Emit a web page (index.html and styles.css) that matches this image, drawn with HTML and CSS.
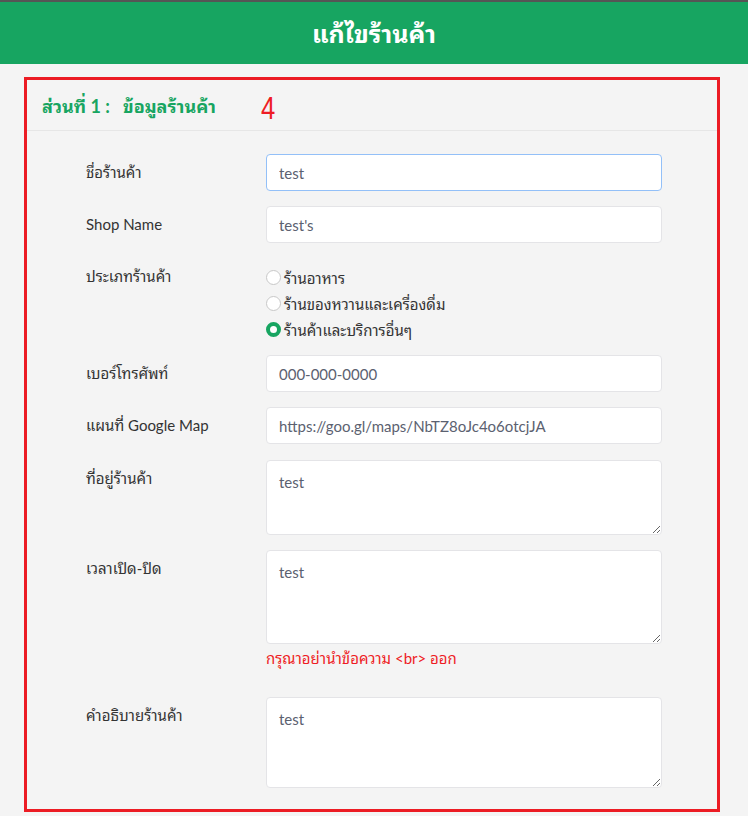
FILE: index.html
```html
<!DOCTYPE html>
<html lang="th">
<head>
<meta charset="utf-8">
<title>แก้ไขร้านค้า</title>
<link rel="stylesheet" href="styles.css">
</head>
<body>
<header class="topbar">
  <h1 class="topbar-title">แก้ไขร้านค้า</h1>
</header>
<main class="panel">
  <div class="panel-head">
    <h2 class="section-title">ส่วนที่ 1 :&nbsp;&nbsp; ข้อมูลร้านค้า</h2>
    <span class="annot">4</span>
  </div>
  <form class="form">
    <div class="row">
      <label class="label">ชื่อร้านค้า</label>
      <input class="field focused" type="text" value="test">
    </div>
    <div class="row">
      <label class="label">Shop Name</label>
      <input class="field" type="text" value="test's">
    </div>
    <div class="row row-radio">
      <label class="label">ประเภทร้านค้า</label>
      <div class="radios">
        <label class="radio"><span class="dot"></span>ร้านอาหาร</label>
        <label class="radio"><span class="dot"></span>ร้านของหวานและเครื่องดื่ม</label>
        <label class="radio"><span class="dot checked"></span>ร้านค้าและบริการอื่นๆ</label>
      </div>
    </div>
    <div class="row">
      <label class="label">เบอร์โทรศัพท์</label>
      <input class="field" type="text" value="000-000-0000">
    </div>
    <div class="row">
      <label class="label">แผนที่ Google Map</label>
      <input class="field" type="text" value="https://goo.gl/maps/NbTZ8oJc4o6otcjJA">
    </div>
    <div class="row row-address">
      <label class="label">ที่อยู่ร้านค้า</label>
      <textarea class="field area area-sm">test</textarea>
    </div>
    <div class="row">
      <label class="label">เวลาเปิด-ปิด</label>
      <div class="stack">
        <textarea class="field area area-lg">test</textarea>
        <p class="help">กรุณาอย่านำข้อความ &lt;br&gt; ออก</p>
      </div>
    </div>
    <div class="row">
      <label class="label">คำอธิบายร้านค้า</label>
      <textarea class="field area area-lg2">test</textarea>
    </div>
  </form>
</main>
</body>
</html>
```
FILE: styles.css
```css
* { box-sizing: border-box; }
html, body {
  margin: 0;
  padding: 0;
  background: #f4f4f4;
}
body {
  font-family: Lato, "Noto Sans Thai Looped", "Noto Sans Thai", "Noto Sans", sans-serif;
  color: #333;
}
.topbar {
  border-top: 2px solid #555;
  background: #17a561;
  height: 64px;
  display: flex;
  align-items: center;
  justify-content: center;
}
.topbar-title {
  margin: 0;
  color: #fff;
  font-size: 25px;
  font-weight: 700;
  line-height: 1;
}
.panel {
  margin: 13px 28px 0 24px;
  border: 3px solid #ec1c24;
  padding-bottom: 21px;
}
.panel-head {
  height: 51px;
  border-bottom: 1px solid #e6e6e6;
  display: flex;
  align-items: center;
  padding-left: 15px;
}
.section-title {
  margin: 0;
  color: #17a561;
  font-size: 18px;
  font-weight: 700;
  width: 219px;
}
.annot {
  color: #ee1c24;
  font-size: 32px;
  font-family: "Liberation Sans", sans-serif;
  line-height: 1;
  display: inline-block;
  transform: scaleX(0.8);
  transform-origin: left center;
  margin-top: 6px;
}
.form {
  padding: 23px 0 0 59px;
  display: flex;
  flex-direction: column;
  gap: 15px;
}
.row {
  display: grid;
  grid-template-columns: 180px 396px;
  align-items: start;
}
.row-address { margin-top: 1px; }
.label {
  font-size: 15px;
  line-height: 37px;
  color: #333;
}
.field {
  display: block;
  width: 396px;
  height: 37px;
  margin: 0;
  padding: 0 12px;
  border: 1px solid #e4e4e7;
  border-radius: 4px;
  background: #fff;
  font-family: Lato, "Noto Sans Thai Looped", "Noto Sans Thai", sans-serif;
  font-size: 15px;
  color: #5b6170;
  outline: none;
}
.field.focused {
  border-color: #93c0f8;
}
.area {
  padding: 9px 12px;
  line-height: 24px;
  resize: vertical;
}
.area-sm { height: 75px; }
.area-lg { height: 94px; }
.area-lg2 { height: 91px; }
.row-radio { margin-bottom: -2px; }
.radios {
  padding-top: 6px;
  display: flex;
  flex-direction: column;
}
.radio {
  display: flex;
  align-items: center;
  height: 26px;
  font-size: 15px;
  color: #333;
}
.dot {
  width: 15px;
  height: 15px;
  border-radius: 50%;
  border: 1px solid #c8c8c8;
  background: #fff;
  margin-right: 3px;
  flex: none;
}
.dot.checked {
  border: 4.5px solid #17a561;
}
.stack { display: flex; flex-direction: column; }
.help {
  margin: 4px 0 14px;
  color: #ee1c24;
  font-size: 15px;
  line-height: 20px;
}
```
